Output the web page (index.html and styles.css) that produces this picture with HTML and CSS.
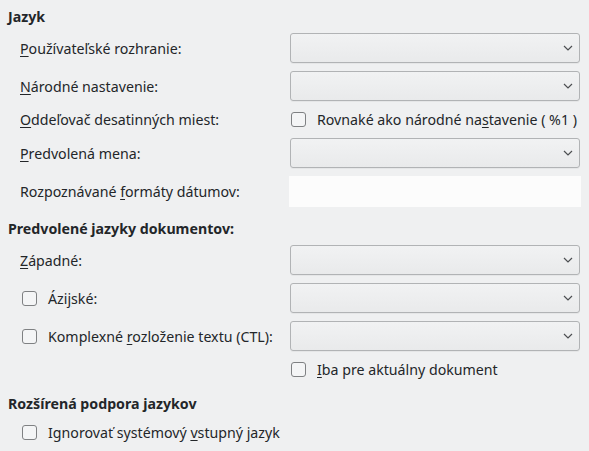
FILE: index.html
```html
<!DOCTYPE html>
<html lang="sk">
<head>
<meta charset="utf-8">
<link rel="stylesheet" href="styles.css">
</head>
<body>
<div class="page">
  <div class="title">Jazyk</div>
  <div class="grid s1">
    <div class="label"><span><u>P</u>oužívateľské rozhranie:</span></div>
    <div class="combo"><svg class="chev" width="10" height="6" viewBox="0 0 10 6"><polyline points="1,1 5,5 9,1" fill="none" stroke="#4d4f52" stroke-width="1.2"/></svg></div>

    <div class="label"><span><u>N</u>árodné nastavenie:</span></div>
    <div class="combo"><svg class="chev" width="10" height="6" viewBox="0 0 10 6"><polyline points="1,1 5,5 9,1" fill="none" stroke="#4d4f52" stroke-width="1.2"/></svg></div>

    <div class="label"><span><u>O</u>ddeľovač desatinných miest:</span></div>
    <div class="check right"><span class="box"></span><span>Rovnaké ako národné na<u>s</u>tavenie ( %1 )</span></div>

    <div class="label"><span><u>P</u>redvolená mena:</span></div>
    <div class="combo"><svg class="chev" width="10" height="6" viewBox="0 0 10 6"><polyline points="1,1 5,5 9,1" fill="none" stroke="#4d4f52" stroke-width="1.2"/></svg></div>

    <div class="label"><span>Rozpoznávané <u>f</u>ormáty dátumov:</span></div>
    <div class="entry"></div>
  </div>

  <div class="title t2">Predvolené jazyky dokumentov:</div>
  <div class="grid s2">
    <div class="label"><span><u>Z</u>ápadné:</span></div>
    <div class="combo"><svg class="chev" width="10" height="6" viewBox="0 0 10 6"><polyline points="1,1 5,5 9,1" fill="none" stroke="#4d4f52" stroke-width="1.2"/></svg></div>

    <div class="check left"><span class="box"></span><span>Ázi<u>j</u>ské:</span></div>
    <div class="combo"><svg class="chev" width="10" height="6" viewBox="0 0 10 6"><polyline points="1,1 5,5 9,1" fill="none" stroke="#4d4f52" stroke-width="1.2"/></svg></div>

    <div class="check left"><span class="box"></span><span>Komplexné <u>r</u>ozloženie textu (CTL):</span></div>
    <div class="combo"><svg class="chev" width="10" height="6" viewBox="0 0 10 6"><polyline points="1,1 5,5 9,1" fill="none" stroke="#4d4f52" stroke-width="1.2"/></svg></div>

    <div class="spacer"></div>
    <div class="check right"><span class="box"></span><span><u>I</u>ba pre aktuálny dokument</span></div>
  </div>

  <div class="title t3">Rozšírená podpora jazykov</div>
  <div class="solo">
    <div class="check left"><span class="box"></span><span>Ignorovať systémový <u>v</u>stupný jazyk</span></div>
  </div>
</div>
</body>
</html>
```

FILE: styles.css
```css
html, body {
  margin: 0;
  padding: 0;
  background: #eff0f1;
}
body {
  font-family: "Noto Sans", "Open Sans", sans-serif;
  font-size: 14.2px;
  color: #232629;
  width: 589px;
  height: 451px;
  overflow: hidden;
}
.page {
  padding: 7px 9px 0 8px;
}
.title {
  height: 20px;
  line-height: 20px;
  font-weight: bold;
}
.t2 { margin-top: 12px; }
.t3 { margin-top: 15px; }
.grid {
  display: grid;
  grid-template-columns: 270px 290px;
  row-gap: 8px;
  margin-top: 6px;
  padding-left: 12px;
}
.s1 {
  grid-template-rows: 30px 30px 21px 30px 31px;
}
.s2 {
  grid-template-rows: 30px 30px 30px 20px;
}
.label {
  display: flex;
  align-items: center;
  white-space: nowrap;
}
u {
  text-decoration-thickness: 1px;
  text-underline-offset: 2px;
}
.combo {
  box-sizing: border-box;
  border: 1px solid #b1b3b5;
  border-radius: 3px;
  background: linear-gradient(#f1f2f3, #e9eaeb);
  display: flex;
  align-items: center;
  justify-content: flex-end;
  padding-right: 6px;
  box-shadow: 0 1px 0 rgba(0,0,0,0.04);
}
.chev {
  display: block;
}
.entry {
  background: #fcfcfc;
  margin: 0 -1px 0 -1px;
}
.check {
  display: flex;
  align-items: center;
  white-space: nowrap;
}
.check.left { padding-left: 2px; gap: 11px; }
.check.right { padding-left: 1px; gap: 11px; }
.box {
  box-sizing: border-box;
  width: 15px;
  height: 15px;
  border: 1px solid #7f8183;
  border-radius: 3px;
  background: #f4f5f6;
  flex: none;
}
.solo {
  margin-top: 8px;
  padding-left: 12px;
  height: 20px;
  display: flex;
}
```
